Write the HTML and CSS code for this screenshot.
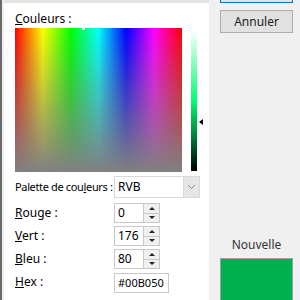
FILE: index.html
```html
<!DOCTYPE html>
<html lang="fr">
<head>
    <meta charset="UTF-8">
    <title>Couleurs</title>
    <link rel="stylesheet" href="styles.css">
</head>
<body>
    <div class="window">
        <div class="left-panel">
            <div class="title"><u>C</u>ouleurs :</div>
            <div class="picker">
                <div class="spectrum">
                    <span class="cross"></span>
                </div>
                <div class="lum-wrap">
                    <div class="lum"></div>
                    <span class="lum-arrow"></span>
                </div>
            </div>
            <div class="fields">
                <label class="row-palette palette-label">Palette de cou<u>l</u>eurs :</label>
                <div class="select row-palette">
                    <span class="select-text">RVB</span>
                    <span class="select-btn">
                        <svg width="9" height="6" viewBox="0 0 9 6"><path d="M1 1 L4.5 4.5 L8 1" fill="none" stroke="#8a8a8a" stroke-width="1"/></svg>
                    </span>
                </div>

                <label><u>R</u>ouge :</label>
                <div class="spin">
                    <span class="spin-text">0</span>
                    <span class="spin-btns"><i class="up"></i><i class="down"></i></span>
                </div>

                <label><u>V</u>ert :</label>
                <div class="spin">
                    <span class="spin-text">176</span>
                    <span class="spin-btns"><i class="up"></i><i class="down"></i></span>
                </div>

                <label><u>B</u>leu :</label>
                <div class="spin">
                    <span class="spin-text">80</span>
                    <span class="spin-btns"><i class="up"></i><i class="down"></i></span>
                </div>

                <label class="row-hex"><u>H</u>ex :</label>
                <div class="hex row-hex">#00B050</div>
            </div>
        </div>
        <div class="right-panel">
            <div class="btn btn-ok"></div>
            <div class="btn">Annuler</div>
            <div class="spacer"></div>
            <div class="new-label">Nouvelle</div>
            <div class="new-color"></div>
        </div>
    </div>
</body>
</html>
```

FILE: styles.css
```css
body {
    margin: 0;
    font-family: "Segoe UI", "Noto Sans", "Open Sans", sans-serif;
    font-size: 12px;
    color: #000;
    background: #f0f0f0;
}
.window {
    display: flex;
    height: 300px;
    overflow: hidden;
    border-left: 2px solid #6a6a6a;
    box-sizing: border-box;
}
.left-panel {
    width: 205px;
    margin-left: 2px;
    margin-top: 3px;
    background: #fff;
    padding: 8px 0 0 11px;
    box-sizing: border-box;
    box-shadow: 0 -3px 0 #e4e4e4;
}
.title {
    height: 16px;
    line-height: 16px;
    margin-bottom: 1px;
}
.picker {
    display: flex;
    align-items: center;
}
.spectrum {
    position: relative;
    width: 167px;
    height: 144px;
    background:
        linear-gradient(to bottom, rgba(128, 128, 128, 0), #808080),
        linear-gradient(to right, #ff0000, #ffff00 16.6%, #00ff00 33.3%, #00ffff 50%, #0000ff 66.6%, #ff00ff 83.3%, #ff0000);
}
.cross {
    position: absolute;
    left: 67px;
    top: 0;
    width: 3px;
    height: 2px;
    background: #fff;
}
.lum-wrap {
    position: relative;
    margin-left: 9px;
}
.lum {
    width: 6px;
    height: 141px;
    background: linear-gradient(to bottom, #ffffff, hsl(147, 100%, 50%) 50%, #000000);
}
.lum-arrow {
    position: absolute;
    left: 8px;
    top: 89px;
    width: 0;
    height: 0;
    border-top: 3px solid transparent;
    border-bottom: 3px solid transparent;
    border-right: 4px solid #000;
}
.fields {
    display: grid;
    grid-template-columns: 99px auto;
    grid-template-rows: 24px 20px 20px 20px 21px;
    row-gap: 3px;
    align-items: center;
    justify-items: start;
    margin-top: 4px;
}
.fields label {
    white-space: nowrap;
    line-height: 16px;
}
.fields .row-palette {
    align-self: start;
}
.fields label.row-palette {
    line-height: 22px;
}
.palette-label {
    font-size: 11px;
    letter-spacing: -0.35px;
}
.fields .row-hex {
    align-self: end;
}
.fields label.row-hex {
    margin-bottom: 3px;
}
.select {
    display: flex;
    width: 86px;
    height: 22px;
    box-sizing: border-box;
    border: 1px solid #d9d9d9;
    background: #fff;
}
.select-text {
    flex: 1;
    line-height: 20px;
    padding-left: 3px;
}
.select-btn {
    width: 15px;
    background: #e6e6e6;
    border-left: 1px solid #d9d9d9;
    display: flex;
    align-items: center;
    justify-content: center;
}
.spin {
    display: flex;
    width: 46px;
    height: 20px;
    box-sizing: border-box;
    border: 1px solid #c8c8c8;
    background: #fff;
}
.spin-text {
    flex: 1;
    line-height: 18px;
    padding-left: 3px;
}
.spin-btns {
    width: 15px;
    display: flex;
    flex-direction: column;
    border-left: 1px solid #c8c8c8;
    background: #f0f0f0;
}
.spin-btns i {
    flex: 1;
    display: flex;
    align-items: center;
    justify-content: center;
}
.spin-btns i::after {
    content: "";
    border-left: 3px solid transparent;
    border-right: 3px solid transparent;
}
.spin-btns .up {
    border-bottom: 1px solid #c8c8c8;
}
.spin-btns .up::after {
    border-bottom: 3px solid #222;
}
.spin-btns .down::after {
    border-top: 3px solid #222;
}
.hex {
    width: 55px;
    height: 20px;
    box-sizing: border-box;
    border: 1px solid #c8c8c8;
    background: #fff;
    line-height: 18px;
    padding-left: 3px;
    font-size: 11px;
}
.right-panel {
    flex: 1;
    display: flex;
    flex-direction: column;
    padding-left: 11px;
    padding-right: 7px;
}
.btn {
    height: 23px;
    flex-shrink: 0;
    box-sizing: border-box;
    border: 1px solid #adadad;
    background: #e1e1e1;
    text-align: center;
    line-height: 21px;
    color: #222;
}
.btn-ok {
    margin-top: -20px;
    border: 1px solid #0078d7;
    margin-bottom: 7px;
}
.spacer {
    flex: 1;
}
.new-label {
    text-align: center;
    color: #333;
    margin-bottom: 5px;
}
.new-color {
    height: 42px;
    flex-shrink: 0;
    margin-bottom: -1px;
    background: #00b050;
    border: 1px solid #a0a0a0;
    border-bottom: none;
}
```
